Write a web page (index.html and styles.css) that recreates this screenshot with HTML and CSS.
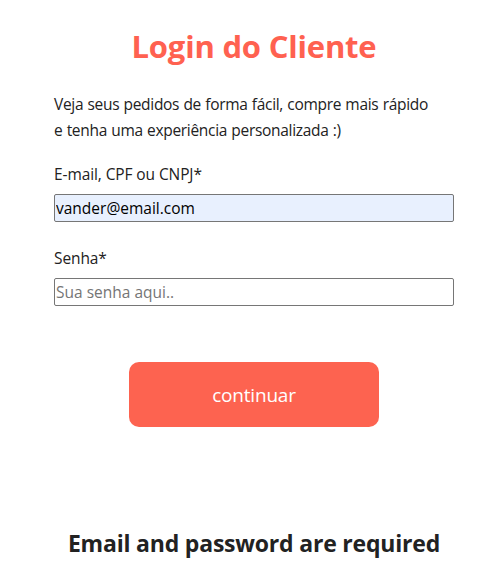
FILE: index.html
```html
<!DOCTYPE html>
<html lang="pt-BR">
<head>
<meta charset="utf-8">
<title>Login do Cliente</title>
<link rel="stylesheet" href="styles.css">
</head>
<body>
<main class="page">
  <h1 class="title">Login do Cliente</h1>
  <form class="form">
    <p class="intro">Veja seus pedidos de forma fácil, compre mais rápido<br>e tenha uma experiência personalizada :)</p>
    <label class="label" for="email">E-mail, CPF ou CNPJ*</label>
    <input class="input input-filled" id="email" type="text" value="vander@email.com">
    <label class="label" for="senha">Senha*</label>
    <input class="input" id="senha" type="password" placeholder="Sua senha aqui..">
    <div class="actions">
      <button class="btn" type="button">continuar</button>
    </div>
  </form>
  <h2 class="error">Email and password are required</h2>
</main>
</body>
</html>
```

FILE: styles.css
```css
* { box-sizing: border-box; }
body {
  margin: 0;
  background: #fff;
  font-family: "Open Sans", "Noto Sans", sans-serif;
  color: #222;
}
.page {
  padding: 0 8px 0 32px;
  display: flex;
  flex-direction: column;
  align-items: center;
}
.title {
  margin: 26px 0 0;
  font-size: 31px;
  font-weight: 700;
  line-height: 40px;
  color: #ff6150;
  letter-spacing: -0.2px;
}
.form {
  width: 400px;
  display: flex;
  flex-direction: column;
}
.intro {
  margin: 25px 0 0;
  font-size: 15.5px;
  line-height: 26px;
  letter-spacing: -0.3px;
  word-spacing: 0.5px;
}
.label {
  margin-top: 21px;
  font-size: 15.5px;
  line-height: 20px;
  letter-spacing: -0.1px;
}
.label + .input { margin-top: 10px; }
.input + .label { margin-top: 26px; }
.input {
  width: 400px;
  height: 28px;
  border: 1px solid #767676;
  border-radius: 2px;
  padding: 0 1px;
  font-family: inherit;
  font-size: 15.5px;
  color: #000;
  background: #fff;
}
.input-filled { background: #e8f0fe; }
.input::placeholder { color: #757575; }
.actions {
  display: flex;
  justify-content: center;
  margin-top: 56px;
}
.btn {
  width: 250px;
  height: 65px;
  border: none;
  border-radius: 10px;
  background: #fd6350;
  color: #fff;
  font-family: inherit;
  font-size: 19px;
  letter-spacing: -0.2px;
}
.error {
  margin: 101px 0 0;
  font-size: 23px;
  line-height: 30px;
  font-weight: 700;
  color: #222;
  letter-spacing: -0.2px;
}
```
